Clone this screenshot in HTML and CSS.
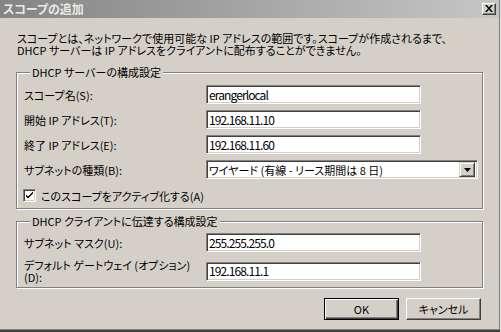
FILE: index.html
```html
<!DOCTYPE html>
<html lang="ja">
<head>
<meta charset="utf-8">
<title>スコープの追加</title>
<link rel="stylesheet" href="styles.css">
</head>
<body>
<div class="window">
  <div class="titlebar">
    <span class="title">スコープの追加</span>
    <span class="close"><svg width="8" height="7" viewBox="0 0 8 7"><path d="M0 0h2l2 2.5L6 0h2L5 3.5 8 7H6L4 4.5 2 7H0l3-3.5z" fill="#000"/></svg></span>
  </div>
  <div class="content">
    <p class="desc">スコープとは、ネットワークで使用可能な IP アドレスの範囲です。スコープが作成されるまで、<br>DHCP サーバーは IP アドレスをクライアントに配布することができません。</p>
    <fieldset class="group g1">
      <legend>DHCP サーバーの構成設定</legend>
      <div class="rows">
        <div class="row"><span class="label">スコープ名(S):</span><span class="input">erangerlocal</span></div>
        <div class="row"><span class="label">開始 IP アドレス(T):</span><span class="input">192.168.11.10</span></div>
        <div class="row"><span class="label">終了 IP アドレス(E):</span><span class="input">192.168.11.60</span></div>
        <div class="row"><span class="label">サブネットの種類(B):</span><span class="select"><span class="sel-text">ワイヤード (有線 - リース期間は 8 日)</span><span class="dd"><svg width="7" height="4" viewBox="0 0 7 4"><path d="M0 0h7L3.5 4z" fill="#000"/></svg></span></span></div>
      </div>
      <div class="check-row">
        <span class="cb"><svg width="9" height="9" viewBox="0 0 9 9"><path d="M1 3.5l2 2 5-5v2l-5 5-2-2z" fill="#000"/></svg></span>
        <span class="cb-label">このスコープをアクティブ化する(A)</span>
      </div>
    </fieldset>
    <fieldset class="group g2">
      <legend>DHCP クライアントに伝達する構成設定</legend>
      <div class="rows rows2">
        <div class="row"><span class="label">サブネット マスク(U):</span><span class="input">255.255.255.0</span></div>
        <div class="row"><span class="label two">デフォルト ゲートウェイ (オプション)<br>(D):</span><span class="input">192.168.11.1</span></div>
      </div>
    </fieldset>
    <div class="buttons">
      <button class="btn default">OK</button>
      <button class="btn">キャンセル</button>
    </div>
  </div>
</div>
</body>
</html>
```

FILE: styles.css
```css
html, body {
  margin: 0;
  padding: 0;
  background: #e4e2dc;
}
body {
  width: 501px;
  height: 332px;
  overflow: hidden;
  font-family: "Noto Sans CJK JP", "Liberation Sans", sans-serif;
  font-size: 11px;
  line-height: 12px;
  color: #000;
  font-feature-settings: "palt";
}
.window {
  width: 499px;
  height: 329px;
  background: #d4d0c8;
  border-right: 1px solid #808080;
  border-bottom: 1px solid #808080;
  box-shadow: 0 2px 0 #404040;
  display: flex;
  flex-direction: column;
}
.titlebar {
  height: 18px;
  flex: none;
  display: flex;
  align-items: flex-start;
  background: linear-gradient(to right, #848484, #c6c6c6);
}
.title {
  margin: 3px 0 0 3px;
  font-size: 12px;
  font-weight: bold;
  color: #eceae6;
  line-height: 12px;
}
.close {
  margin: 3px 3px 0 auto;
  width: 12px;
  height: 10px;
  background: #d4d0c8;
  border: 1px solid;
  border-color: #fff #404040 #404040 #fff;
  box-shadow: inset -1px -1px 0 #808080;
  display: flex;
  align-items: center;
  justify-content: center;
}
.close svg { display: block; margin: 0 1px 1px 0; }
.content {
  padding: 0 16px;
}
.desc {
  margin: 14px 0 0 1px;
  line-height: 12px;
  white-space: nowrap;
}
.group {
  box-sizing: border-box;
  width: 467px;
  margin: 10px 0 0 0;
  padding: 7px 0 0 7px;
  border: 1px solid #808080;
  box-shadow: inset 1px 1px 0 #fff, 1px 1px 0 #fff;
  min-inline-size: 0;
}
.group legend {
  margin-left: 6px;
  padding: 0 2px;
  line-height: 12px;
  background: #d4d0c8;
}
.rows {
  display: flex;
  flex-direction: column;
  gap: 6px;
}
.row {
  display: flex;
  align-items: center;
}
.label {
  width: 182px;
  flex: none;
  white-space: nowrap;
}
.input, .select {
  box-sizing: border-box;
  height: 19px;
  background: #fff;
  border: 1px solid;
  border-color: #808080 #fff #fff #808080;
  box-shadow: inset 1px 1px 0 #404040, inset -1px -1px 0 #d4d0c8;
  padding: 0 2px;
  display: flex;
  align-items: center;
}
.input {
  width: 215px;
  font-size: 12px;
  letter-spacing: -0.9px;
}
.select {
  width: 272px;
  padding-right: 2px;
}
.sel-text { flex: 1; white-space: nowrap; }
.dd {
  box-sizing: border-box;
  width: 16px;
  height: 15px;
  background: #d4d0c8;
  border: 1px solid;
  border-color: #d4d0c8 #404040 #404040 #d4d0c8;
  box-shadow: inset 1px 1px 0 #fff, inset -1px -1px 0 #808080;
  display: flex;
  align-items: center;
  justify-content: center;
}
.dd svg { display: block; }
.check-row {
  display: flex;
  align-items: center;
  margin-top: 10px;
  padding-bottom: 6px;
}
.cb {
  box-sizing: border-box;
  width: 13px;
  height: 13px;
  margin-left: -1px;
  background: #fff;
  border: 1px solid;
  border-color: #808080 #fff #fff #808080;
  box-shadow: inset 1px 1px 0 #404040, inset -1px -1px 0 #d4d0c8;
  display: flex;
  align-items: center;
  justify-content: center;
}
.cb svg { display: block; }
.cb-label { margin-left: 5px; }
.g2 {
  margin-top: 6px;
  padding-top: 6px;
  padding-bottom: 4px;
}
.rows2 { gap: 7px; }
.label.two { line-height: 12px; }
.buttons {
  display: flex;
  justify-content: flex-end;
  gap: 7px;
  margin-top: 10px;
  padding-right: 2px;
}
.btn {
  box-sizing: border-box;
  width: 75px;
  height: 22px;
  margin: 0;
  padding: 0;
  font: inherit;
  color: #000;
  background: #d4d0c8;
  border: 1px solid;
  border-color: #fff #404040 #404040 #fff;
  box-shadow: inset -1px -1px 0 #808080;
}
.btn.default {
  border-color: #000;
  box-shadow: inset 1px 1px 0 #fff, inset -1px -1px 0 #404040, inset -2px -2px 0 #808080;
}
```
